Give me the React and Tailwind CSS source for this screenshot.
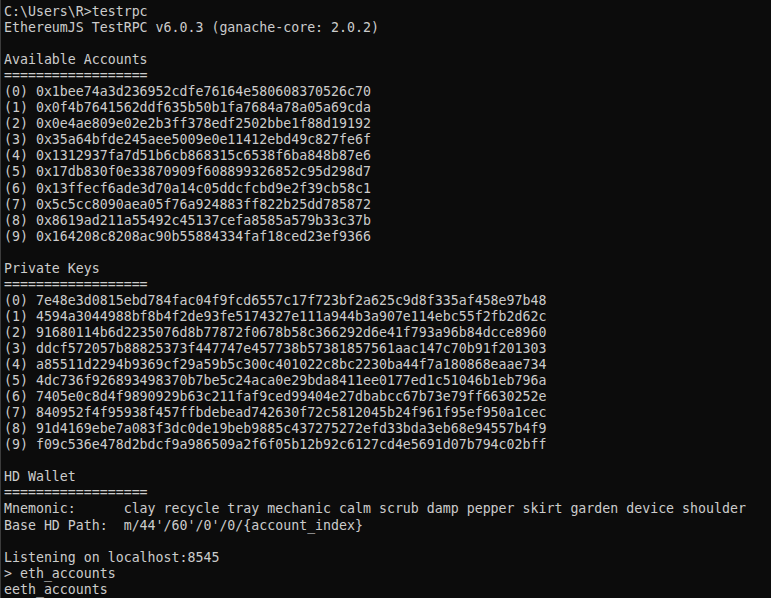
const lines = [
  "C:\\Users\\R>testrpc",
  "EthereumJS TestRPC v6.0.3 (ganache-core: 2.0.2)",
  "",
  "Available Accounts",
  "==================",
  "(0) 0x1bee74a3d236952cdfe76164e580608370526c70",
  "(1) 0x0f4b7641562ddf635b50b1fa7684a78a05a69cda",
  "(2) 0x0e4ae809e02e2b3ff378edf2502bbe1f88d19192",
  "(3) 0x35a64bfde245aee5009e0e11412ebd49c827fe6f",
  "(4) 0x1312937fa7d51b6cb868315c6538f6ba848b87e6",
  "(5) 0x17db830f0e33870909f608899326852c95d298d7",
  "(6) 0x13ffecf6ade3d70a14c05ddcfcbd9e2f39cb58c1",
  "(7) 0x5c5cc8090aea05f76a924883ff822b25dd785872",
  "(8) 0x8619ad211a55492c45137cefa8585a579b33c37b",
  "(9) 0x164208c8208ac90b55884334faf18ced23ef9366",
  "",
  "Private Keys",
  "==================",
  "(0) 7e48e3d0815ebd784fac04f9fcd6557c17f723bf2a625c9d8f335af458e97b48",
  "(1) 4594a3044988bf8b4f2de93fe5174327e111a944b3a907e114ebc55f2fb2d62c",
  "(2) 91680114b6d2235076d8b77872f0678b58c366292d6e41f793a96b84dcce8960",
  "(3) ddcf572057b88825373f447747e457738b57381857561aac147c70b91f201303",
  "(4) a85511d2294b9369cf29a59b5c300c401022c8bc2230ba44f7a180868eaae734",
  "(5) 4dc736f926893498370b7be5c24aca0e29bda8411ee0177ed1c51046b1eb796a",
  "(6) 7405e0c8d4f9890929b63c211faf9ced99404e27dbabcc67b73e79ff6630252e",
  "(7) 840952f4f95938f457ffbdebead742630f72c5812045b24f961f95ef950a1cec",
  "(8) 91d4169ebe7a083f3dc0de19beb9885c437275272efd33bda3eb68e94557b4f9",
  "(9) f09c536e478d2bdcf9a986509a2f6f05b12b92c6127cd4e5691d07b794c02bff",
  "",
  "HD Wallet",
  "==================",
  "Mnemonic:      clay recycle tray mechanic calm scrub damp pepper skirt garden device shoulder",
  "Base HD Path:  m/44'/60'/0'/0/{account_index}",
  "",
  "Listening on localhost:8545",
  "> eth_accounts",
  "eeth_accounts",
];

export default function App() {
  return (
    <div className="h-[598px] w-[771px] overflow-hidden bg-[#0c0c0c] border-l border-[#3c3c3c]">
      <pre className="pl-[3px] pt-[4px] m-0 whitespace-pre font-['DejaVu_Sans_Mono','Liberation_Mono',monospace] text-[13.26px] leading-[16.05px] text-[#cccccc]">
        {lines.join("\n")}
      </pre>
    </div>
  );
}
